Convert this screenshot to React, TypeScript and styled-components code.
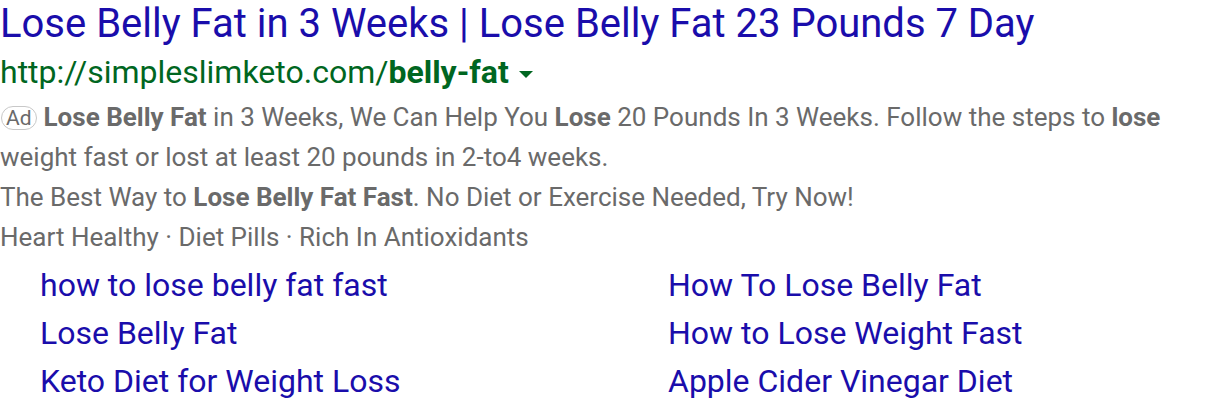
import React from "react";
import styled, { createGlobalStyle } from "styled-components";

const Global = createGlobalStyle`
  html, body { margin: 0; padding: 0; background: #fff; }
  body { font-family: Roboto, "Noto Sans", Arial, sans-serif; }
`;

const Wrap = styled.div`
  width: 1216px;
`;

const Title = styled.a`
  display: block;
  color: #1a0dab;
  font-size: 40px;
  line-height: 48px;
  text-decoration: none;
  white-space: nowrap;
`;

const UrlRow = styled.div`
  display: flex;
  align-items: center;
  color: #006621;
  font-size: 32px;
  line-height: 48px;
  white-space: nowrap;
`;

const Caret = styled.span`
  display: inline-block;
  width: 0;
  height: 0;
  margin-left: 10px;
  margin-top: 4px;
  border-left: 7px solid transparent;
  border-right: 7px solid transparent;
  border-top: 7px solid #006621;
`;

const Body = styled.div`
  color: #6a6a6a;
  font-size: 26px;
  line-height: 40px;
  margin-top: 1px;
  white-space: nowrap;
  b { font-weight: 700; }
`;

const Badge = styled.span`
  display: inline-block;
  box-sizing: border-box;
  border: 1px solid #c8c8c8;
  border-radius: 12px;
  padding: 0 4px;
  height: 24px;
  font-size: 21px;
  line-height: 22px;
  margin-right: 7px;
  margin-left: 1px;
  vertical-align: 1px;
  color: #6a6a6a;
`;

const Links = styled.div`
  display: grid;
  grid-template-columns: 628px 1fr;
  padding-left: 40px;
  margin-top: 4px;
`;

const Sitelink = styled.a`
  color: #1a0dab;
  font-size: 32px;
  line-height: 48px;
  text-decoration: none;
  white-space: nowrap;
`;

const links = [
  "how to lose belly fat fast",
  "How To Lose Belly Fat",
  "Lose Belly Fat",
  "How to Lose Weight Fast",
  "Keto Diet for Weight Loss",
  "Apple Cider Vinegar Diet",
];

export default function App() {
  return (
    <Wrap>
      <Global />
      <Title href="#">Lose Belly Fat in 3 Weeks | Lose Belly Fat 23 Pounds 7 Day</Title>
      <UrlRow>
        <span>
          http://simpleslimketo.com/<b>belly-fat</b>
        </span>
        <Caret />
      </UrlRow>
      <Body>
        <Badge>Ad</Badge>
        <b>Lose Belly Fat</b> in 3 Weeks, We Can Help You <b>Lose</b> 20 Pounds In 3 Weeks. Follow the steps to <b>lose</b>
        <br />
        weight fast or lost at least 20 pounds in 2-to4 weeks.
        <br />
        The Best Way to <b>Lose Belly Fat Fast</b>. No Diet or Exercise Needed, Try Now!
        <br />
        Heart Healthy · Diet Pills · Rich In Antioxidants
      </Body>
      <Links>
        {links.map((l) => (
          <Sitelink href="#" key={l}>
            {l}
          </Sitelink>
        ))}
      </Links>
    </Wrap>
  );
}
